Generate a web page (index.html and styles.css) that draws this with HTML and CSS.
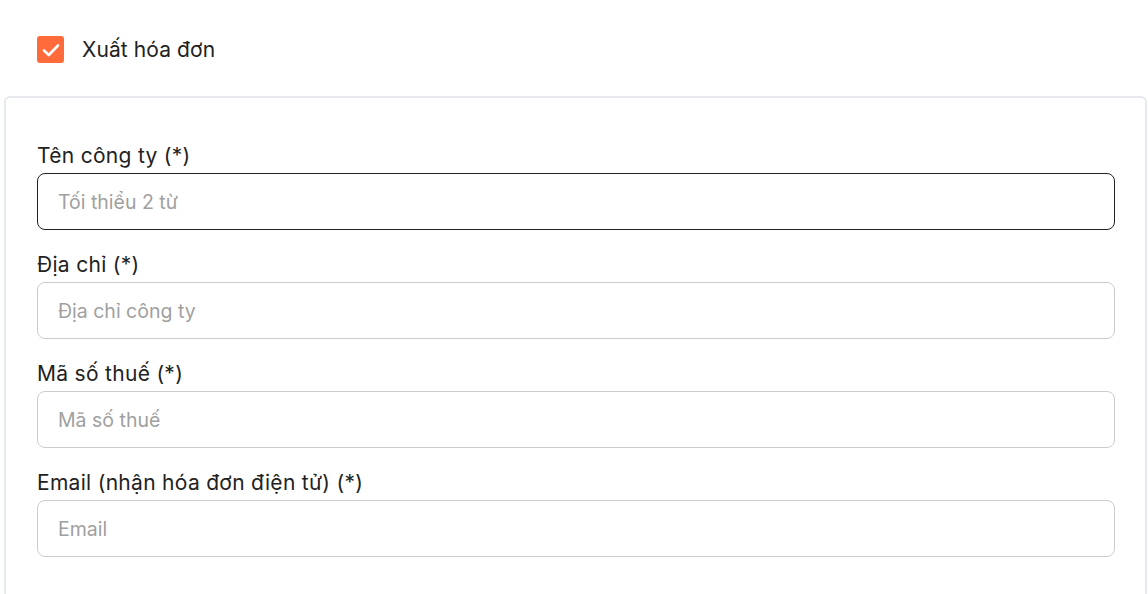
FILE: index.html
```html
<!DOCTYPE html>
<html lang="vi">
<head>
    <meta charset="UTF-8">
    <meta name="viewport" content="width=device-width, initial-scale=1.0">
    <title>Xuất hóa đơn</title>
    <link rel="stylesheet" href="styles.css">
</head>
<body>

<label class="xuat-hoa-don">
    <span class="checkbox">
        <svg width="18" height="14" viewBox="0 0 18 14"><path d="M2 7.5 L6.8 12 L16 2.5" fill="none" stroke="#fff" stroke-width="2.6" stroke-linecap="round" stroke-linejoin="round"/></svg>
    </span>
    <span>Xuất hóa đơn</span>
</label>

<div class="the-hoa-don">
    <div class="nhom">
        <label class="nhan">Tên công ty (*)</label>
        <input class="o-nhap o-nhap-focus" type="text" placeholder="Tối thiểu 2 từ">
    </div>
    <div class="nhom">
        <label class="nhan">Địa chỉ (*)</label>
        <input class="o-nhap" type="text" placeholder="Địa chỉ công ty">
    </div>
    <div class="nhom">
        <label class="nhan">Mã số thuế (*)</label>
        <input class="o-nhap" type="text" placeholder="Mã số thuế">
    </div>
    <div class="nhom">
        <label class="nhan">Email (nhận hóa đơn điện tử) (*)</label>
        <input class="o-nhap" type="email" placeholder="Email">
    </div>
</div>

</body>
</html>
```

FILE: styles.css
```css
body {
    font-family: Inter, "Noto Sans", sans-serif;
    color: #222;
    background-color: #fff;
    margin: 0;
    padding: 36px 1px 0 4px;
}

.xuat-hoa-don {
    display: flex;
    align-items: center;
    gap: 18px;
    margin-left: 33px;
    font-size: 21px;
    letter-spacing: 0.1px;
    height: 27px;
}

.checkbox {
    width: 27px;
    height: 27px;
    border-radius: 3px;
    background-color: #FF6B3B;
    display: flex;
    align-items: center;
    justify-content: center;
}

.the-hoa-don {
    margin-top: 33px;
    border: 2px solid #E6E9EE;
    border-radius: 6px;
    padding: 46px 30px 40px 31px;
    display: flex;
    flex-direction: column;
    gap: 23px;
}

.nhom {
    display: flex;
    flex-direction: column;
}

.nhan {
    font-size: 21px;
    line-height: 24px;
    letter-spacing: 0.3px;
    margin-bottom: 5px;
}

.o-nhap {
    height: 57px;
    box-sizing: border-box;
    border: 1px solid #CCCCCC;
    border-radius: 8px;
    padding: 0 20px;
    font-family: inherit;
    font-size: 19.5px;
    color: #222;
    outline: none;
}

.o-nhap::placeholder {
    color: #A0A0A0;
}

.o-nhap-focus {
    border-color: #222;
}
```
